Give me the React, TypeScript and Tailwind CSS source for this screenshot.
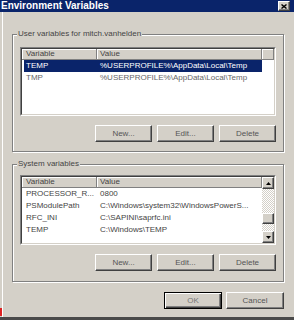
import type { ReactNode } from "react";

const raised =
  "border border-t-white border-l-white border-r-[#404040] border-b-[#404040] shadow-[inset_-1px_-1px_0_#808080]";

type Row = { name: string; value: string; selected?: boolean; muted?: boolean };

const userRows: Row[] = [
  { name: "TEMP", value: "%USERPROFILE%\\AppData\\Local\\Temp", selected: true },
  { name: "TMP", value: "%USERPROFILE%\\AppData\\Local\\Temp", muted: true },
];

const systemRows: Row[] = [
  { name: "PROCESSOR_R...", value: "0800" },
  { name: "PSModulePath", value: "C:\\Windows\\system32\\WindowsPowerS..." },
  { name: "RFC_INI", value: "C:\\SAPINI\\saprfc.ini" },
  { name: "TEMP", value: "C:\\Windows\\TEMP" },
];

function Button({ children, wide = false, isDefault = false }: { children: ReactNode; wide?: boolean; isDefault?: boolean }) {
  if (isDefault) {
    return (
      <div
        className={`flex h-[17px] ${wide ? "w-[58px]" : "w-[57px]"} items-center justify-center border border-black text-[8px] text-[#777] shadow-[inset_1px_1px_0_#fff,inset_-1px_-1px_0_#404040,inset_-2px_-2px_0_#808080]`}
      >
        {children}
      </div>
    );
  }
  return (
    <div
      className={`flex h-[17px] ${wide ? "w-[58px]" : "w-[57px]"} items-center justify-center text-[8px] text-[#555] ${raised}`}
    >
      {children}
    </div>
  );
}

function HeaderCell({ children, w, pl }: { children?: ReactNode; w: string; pl: string }) {
  return (
    <div
      className={`${w} ${pl} flex h-full shrink-0 items-center border-r border-b border-r-[#808080] border-b-[#808080] bg-[#d4d0c8] text-[8px] text-[#444] shadow-[inset_1px_1px_0_#fff]`}
    >
      {children}
    </div>
  );
}

function Arrow({ down = false }: { down?: boolean }) {
  return (
    <svg width="5" height="3" viewBox="0 0 5 3" className="block">
      {down ? <polygon points="0,0 5,0 2.5,3" fill="#000" /> : <polygon points="2.5,0 5,3 0,3" fill="#000" />}
    </svg>
  );
}

function ListView({ rows, height, scroll = false }: { rows: Row[]; height: string; scroll?: boolean }) {
  return (
    <div className={`${height} border border-t-[#808080] border-l-[#808080] border-r-white border-b-white`}>
      <div className="flex h-full border border-t-[#404040] border-l-[#404040] border-r-[#d4d0c8] border-b-[#d4d0c8] bg-white">
        <div className="flex min-w-0 flex-1 flex-col overflow-hidden">
          <div className="flex h-[11px] shrink-0">
            <HeaderCell w="w-[75px]" pl="pl-[4px]">
              Variable
            </HeaderCell>
            <HeaderCell w="w-[165px]" pl="pl-[3px]">
              Value
            </HeaderCell>
            {!scroll && <HeaderCell w="flex-1" pl="pl-0" />}
          </div>
          {rows.map((r) => (
            <div
              key={r.name + r.value}
              className={`ml-[2px] flex h-[12px] w-[238px] shrink-0 items-center text-[8px] leading-[12px] whitespace-nowrap ${
                r.selected ? "bg-[#0a246a] text-white" : r.muted ? "text-[#666]" : "text-[#444]"
              }`}
            >
              <div className="w-[73px] shrink-0 pl-[2px]">{r.name}</div>
              <div className="w-[165px] shrink-0 overflow-hidden pl-[3px]">{r.value}</div>
            </div>
          ))}
        </div>
        {scroll && (
          <div className="flex w-[12px] shrink-0 flex-col">
            <div className={`flex h-[12px] shrink-0 items-center justify-center bg-[#d4d0c8] ${raised}`}>
              <Arrow />
            </div>
            <div className="flex-1 bg-[repeating-conic-gradient(#d4d0c8_0_25%,#ffffff_0_50%)] bg-[length:2px_2px]">
              <div className={`mt-[24px] h-[11px] bg-[#d4d0c8] ${raised}`} />
            </div>
            <div className={`flex h-[12px] shrink-0 items-center justify-center bg-[#d4d0c8] ${raised}`}>
              <Arrow down />
            </div>
          </div>
        )}
      </div>
    </div>
  );
}

function Group({ label, mt, pt, pb, children }: { label: string; mt: string; pt: string; pb: string; children: ReactNode }) {
  return (
    <div
      className={`relative ${mt} ${pt} ${pb} border border-[#808080] px-[7px] shadow-[1px_1px_0_#fff,inset_1px_1px_0_#fff]`}
    >
      <span className="absolute top-[-7px] left-[4px] bg-[#d4d0c8] px-[1px] text-[8px] leading-[12px] text-[#444]">
        {label}
      </span>
      {children}
    </div>
  );
}

export default function App() {
  return (
    <div className="relative flex h-[320px] w-[294px] flex-col overflow-hidden bg-[#d4d0c8] font-['Liberation_Sans',Arial,sans-serif]">
      <div className="flex h-[12px] shrink-0 items-start justify-between bg-[#0a246a] pr-[4px] pl-[1px]">
        <span className="pt-[1px] text-[10px] leading-[10px] font-bold text-white">Environment Variables</span>
        <div className={`mt-[1px] flex h-[10px] w-[12px] items-center justify-center bg-[#d4d0c8] ${raised}`}>
          <svg width="6" height="5" viewBox="0 0 6 5">
            <path d="M0.5 0.5 L5.5 4.5 M5.5 0.5 L0.5 4.5" stroke="#000" strokeWidth="1.4" />
          </svg>
        </div>
      </div>

      <div className="ml-[2px] flex flex-1 flex-col border-l border-white pr-[10px] pl-[9px]">
        <Group label="User variables for mitch.vanhelden" mt="mt-[22px]" pt="pt-[12px]" pb="pb-[9px]">
          <ListView rows={userRows} height="h-[69px]" />
          <div className="mt-[9px] flex justify-end gap-[5px]">
            <Button>New...</Button>
            <Button>Edit...</Button>
            <Button>Delete</Button>
          </div>
        </Group>

        <Group label="System variables" mt="mt-[12px]" pt="pt-[10px]" pb="pb-[10px]">
          <ListView rows={systemRows} height="h-[70px]" scroll />
          <div className="mt-[9px] flex justify-end gap-[5px]">
            <Button>New...</Button>
            <Button>Edit...</Button>
            <Button>Delete</Button>
          </div>
        </Group>

        <div className="mt-[10px] flex justify-end gap-[4px]">
          <Button wide isDefault>
            OK
          </Button>
          <Button wide>Cancel</Button>
        </div>
      </div>

      <div className="h-[3px] shrink-0 bg-[#4a4a4a]" />
      <div className="absolute bottom-[4px] left-0 h-[8px] w-[2px] bg-[#d22]" />
    </div>
  );
}
